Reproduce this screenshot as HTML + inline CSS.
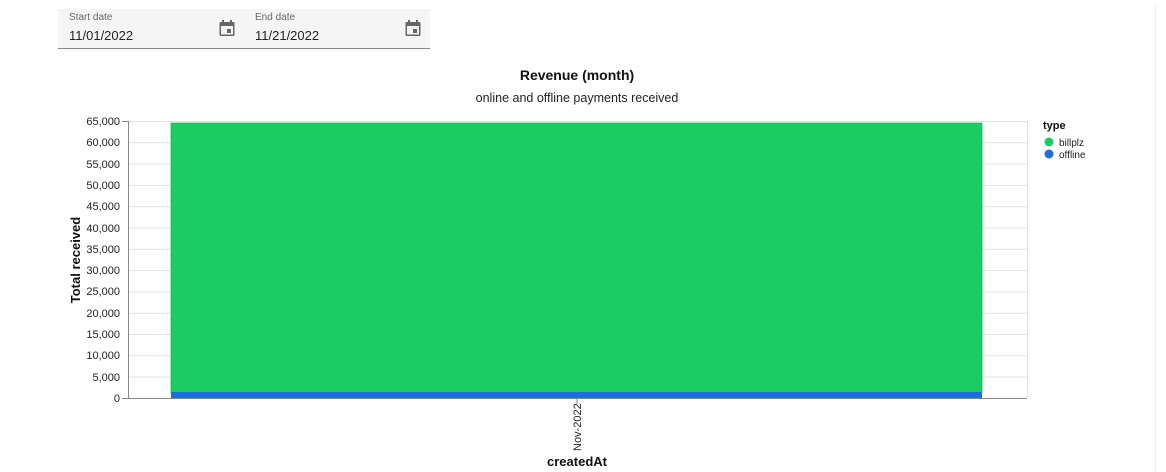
<!DOCTYPE html><html><head><style>body{margin:0;background:#fff;width:1166px;height:472px;overflow:hidden;font-family:"Liberation Sans",sans-serif}</style></head><body>
<div style="position:absolute;left:58px;top:9px;width:372px;height:39px;background:#f5f5f5;border-bottom:1px solid #8a8a8a"></div>
<div style="position:absolute;left:69px;top:12px;font-size:10px;color:#666">Start date</div>
<div style="position:absolute;left:69px;top:28px;font-size:13px;color:#222">11/01/2022</div>
<div style="position:absolute;left:255px;top:12px;font-size:10px;color:#666">End date</div>
<div style="position:absolute;left:255px;top:28px;font-size:13px;color:#222">11/21/2022</div>
<svg width="1166" height="472" style="position:absolute;left:0;top:0">
<g fill="#666"><path d="M221 22h1v-2h2v2h6v-2h2v2h1a1.5 1.5 0 0 1 1.5 1.5v11a1.5 1.5 0 0 1-1.5 1.5h-12a1.5 1.5 0 0 1-1.5-1.5v-11a1.5 1.5 0 0 1 1.5-1.5zm0 4v8.5h12V26z"/><rect x="227" y="29" width="4" height="4"/>
<path d="M407 22h1v-2h2v2h6v-2h2v2h1a1.5 1.5 0 0 1 1.5 1.5v11a1.5 1.5 0 0 1-1.5 1.5h-12a1.5 1.5 0 0 1-1.5-1.5v-11a1.5 1.5 0 0 1 1.5-1.5zm0 4v8.5h12V26z"/><rect x="413" y="29" width="4" height="4"/></g>
<line x1="1155.5" y1="4" x2="1155.5" y2="472" stroke="#eee"/>
<text x="577" y="80" text-anchor="middle" font-size="14" font-weight="bold" fill="#111">Revenue (month)</text>
<text x="577" y="102" text-anchor="middle" font-size="12.5" fill="#222">online and offline payments received</text>
<g stroke="#e3e3e3">
<line x1="128" x2="1027" y1="121.5" y2="121.5"/><line x1="128" x2="1027" y1="142.8" y2="142.8"/><line x1="128" x2="1027" y1="164.1" y2="164.1"/><line x1="128" x2="1027" y1="185.4" y2="185.4"/><line x1="128" x2="1027" y1="206.7" y2="206.7"/><line x1="128" x2="1027" y1="228" y2="228"/><line x1="128" x2="1027" y1="249.3" y2="249.3"/><line x1="128" x2="1027" y1="270.6" y2="270.6"/><line x1="128" x2="1027" y1="291.9" y2="291.9"/><line x1="128" x2="1027" y1="313.2" y2="313.2"/><line x1="128" x2="1027" y1="334.5" y2="334.5"/><line x1="128" x2="1027" y1="355.8" y2="355.8"/><line x1="128" x2="1027" y1="377.1" y2="377.1"/>
<line x1="1027.5" x2="1027.5" y1="121" y2="398"/></g>
<rect x="171" y="123" width="811" height="270" fill="#1bcc63" stroke="#14b055" stroke-width="0.7"/>
<rect x="171" y="392" width="811" height="6" fill="#1f6fd6"/>
<g stroke="#888"><line x1="128.5" x2="128.5" y1="121" y2="398"/><line x1="128" x2="1027" y1="398.5" y2="398.5"/><line x1="577" x2="577" y1="398" y2="404"/></g>
<g font-size="11" fill="#222" text-anchor="end">
<text x="120" y="125">65,000</text><text x="120" y="146">60,000</text><text x="120" y="168">55,000</text><text x="120" y="189">50,000</text><text x="120" y="210">45,000</text><text x="120" y="232">40,000</text><text x="120" y="253">35,000</text><text x="120" y="274">30,000</text><text x="120" y="295">25,000</text><text x="120" y="317">20,000</text><text x="120" y="338">15,000</text><text x="120" y="359">10,000</text><text x="120" y="381">5,000</text><text x="120" y="402">0</text></g>
<g stroke="#888"><line x1="122" x2="128" y1="121.5" y2="121.5"/><line x1="122" x2="128" y1="398.5" y2="398.5"/></g>
<text transform="translate(581,451) rotate(-90)" font-size="11" fill="#222">Nov-2022</text>
<text x="577" y="466" text-anchor="middle" font-size="13" font-weight="bold" fill="#111">createdAt</text>
<text transform="translate(80,260) rotate(-90)" text-anchor="middle" font-size="13" font-weight="bold" fill="#111">Total received</text>
<text x="1043" y="129" font-size="11" font-weight="bold" fill="#111">type</text>
<circle cx="1049" cy="142" r="4.5" fill="#1bcc63"/><text x="1059" y="146" font-size="10" fill="#222">billplz</text>
<circle cx="1049" cy="154" r="4.5" fill="#1f6fd6"/><text x="1059" y="158" font-size="10" fill="#222">offline</text>
</svg></body></html>
